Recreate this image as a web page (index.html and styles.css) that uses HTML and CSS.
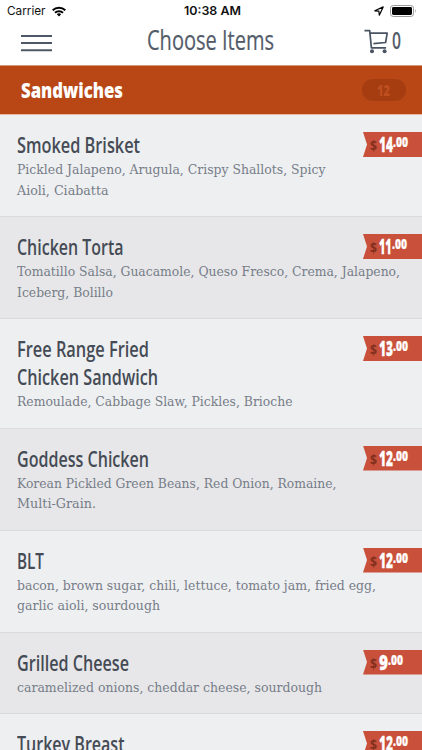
FILE: index.html
```html
<!DOCTYPE html>
<html lang="en">
<head>
<meta charset="utf-8">
<title>Choose Items</title>
<link rel="stylesheet" href="styles.css">
</head>
<body>
<header class="top">
  <div class="status">
    <div class="carrier"><span class="fit" data-w="38.5">Carrier</span>
      <svg width="14" height="11" viewBox="0 0 14 11"><g fill="none" stroke="#000" stroke-width="2"><path d="M.7 4.2a9 9 0 0 1 12.6 0"/><path d="M3 6.8a5.7 5.7 0 0 1 8 0"/></g><path d="M4.8 8.3a3.2 3.2 0 0 1 4.4 0L7 10.6z"/></svg>
    </div>
    <div class="clock"><span class="fit" data-w="57">10:38 AM</span></div>
    <div class="power">
      <svg width="10" height="10" viewBox="0 0 10 10"><path d="M.8 4.8 9.2.9 5.3 9.2 4.9 5.1z" fill="none" stroke="#000" stroke-width="1.2" stroke-linejoin="round"/></svg>
      <svg width="27" height="12" viewBox="0 0 27 12"><rect x=".5" y=".5" width="23" height="11" rx="2.8" fill="#fff" stroke="#999"/><rect x="2" y="2" width="20" height="8" rx="1.4"/><path d="M25 4q1.6 2 0 4z" fill="#999"/></svg>
    </div>
  </div>
  <div class="nav">
    <svg class="menu" width="31" height="18" viewBox="0 0 31 18"><path d="M0 2h31M0 9h31M0 16.2h31" stroke="#4f5866" stroke-width="2"/></svg>
    <h1><span class="fit" data-w="127">Choose Items</span></h1>
    <div class="cart">
      <svg width="25" height="25" viewBox="0 0 25 25"><g fill="none" stroke="#4a5361" stroke-width="1.7" stroke-linejoin="round"><path d="M.5 1.7h5.2l1.7 17.1h14.7"/><path d="M6 4.2h17.2l-1.6 9.3-12.2 1.2"/></g><circle cx="8" cy="22.2" r="2" fill="#4a5361"/><circle cx="20.6" cy="22.2" r="2" fill="#4a5361"/></svg>
      <span class="fit" data-w="9">0</span>
    </div>
  </div>
</header>
<main>
  <div class="section"><h2><span class="fit" data-w="102">Sandwiches</span></h2><div class="count"><span class="fit" data-w="13">12</span></div></div>
  <article><div class="text"><h3><span class="fit" data-w="123">Smoked Brisket</span></h3><p><span class="fit" data-w="308.5">Pickled Jalapeno, Arugula, Crispy Shallots, Spicy</span><span class="fit" data-w="91.5">Aioli, Ciabatta</span></p></div><div class="price"><span class="cur fit" data-w="7">$</span><b class="fit" data-w="14">14</b><sup class="fit" data-w="15">.00</sup></div></article>
  <article><div class="text"><h3><span class="fit" data-w="106.5">Chicken Torta</span></h3><p><span class="fit" data-w="383">Tomatillo Salsa, Guacamole, Queso Fresco, Crema, Jalapeno,</span><span class="fit" data-w="96">Iceberg, Bolillo</span></p></div><div class="price"><span class="cur fit" data-w="7">$</span><b class="fit" data-w="12.5">11</b><sup class="fit" data-w="15">.00</sup></div></article>
  <article><div class="text"><h3><span class="fit" data-w="132">Free Range Fried</span><span class="fit" data-w="141">Chicken Sandwich</span></h3><p><span class="fit" data-w="275.5">Remoulade, Cabbage Slaw, Pickles, Brioche</span></p></div><div class="price"><span class="cur fit" data-w="7">$</span><b class="fit" data-w="14">13</b><sup class="fit" data-w="15">.00</sup></div></article>
  <article><div class="text"><h3><span class="fit" data-w="132">Goddess Chicken</span></h3><p><span class="fit" data-w="319.5">Korean Pickled Green Beans, Red Onion, Romaine,</span><span class="fit" data-w="79">Multi-Grain.</span></p></div><div class="price"><span class="cur fit" data-w="7">$</span><b class="fit" data-w="14">12</b><sup class="fit" data-w="15">.00</sup></div></article>
  <article><div class="text"><h3><span class="fit" data-w="27">BLT</span></h3><p><span class="fit" data-w="359">bacon, brown sugar, chili, lettuce, tomato jam, fried egg,</span><span class="fit" data-w="143">garlic aioli, sourdough</span></p></div><div class="price"><span class="cur fit" data-w="7">$</span><b class="fit" data-w="14">12</b><sup class="fit" data-w="15">.00</sup></div></article>
  <article><div class="text"><h3><span class="fit" data-w="112">Grilled Cheese</span></h3><p><span class="fit" data-w="305">caramelized onions, cheddar cheese, sourdough</span></p></div><div class="price"><span class="cur fit" data-w="7">$</span><b class="fit" data-w="9">9</b><sup class="fit" data-w="15">.00</sup></div></article>
  <article><div class="text"><h3><span class="fit" data-w="107.5">Turkey Breast</span></h3></div><div class="price"><span class="cur fit" data-w="7">$</span><b class="fit" data-w="14">12</b><sup class="fit" data-w="15">.00</sup></div></article>
</main>
<script src="fit.js"></script>
</body>
</html>
```
FILE: styles.css
```css
* { box-sizing: border-box; }
body { margin: 0; width: 422px; height: 750px; overflow: hidden; display: flex; flex-direction: column; background: #eeeff1; font-family: "Open Sans", "Noto Sans", sans-serif; }
h1, h2, h3, p { margin: 0; font-weight: 400; }
svg { display: block; flex: none; }
.fit { display: block; flex: none; white-space: nowrap; transform-origin: 0 50%; }
.top { height: 65px; flex: none; background: #fff; }
.status { height: 22px; display: grid; grid-template-columns: 1fr 57px 1fr; align-items: center; padding: 0 5px 0 7px; font: 12px/22px Inter, sans-serif; color: #111; }
.carrier { display: flex; gap: 6px; align-items: center; }
.clock { font-weight: 600; }
.power { display: flex; justify-content: flex-end; align-items: center; gap: 6px; }
.nav { height: 43px; display: flex; align-items: flex-start; padding: 0 20px 0 21px; color: #535c69; }
.menu { margin-top: 12px; }
h1 { margin-left: 95px; font-size: 26.5px; line-height: 36px; font-weight: 500; -webkit-text-stroke: .2px currentColor; }
.cart { display: flex; margin: 7px 0 0 90px; gap: 3px; }
.cart .fit { font-size: 22.5px; line-height: 23px; font-weight: 600; }
main { flex: 1; overflow: hidden; }
.section { height: 50px; border-top: 1px solid #d19a7d; border-bottom: 1px solid #e5b8a4; background: #b84715; display: flex; align-items: center; justify-content: space-between; padding: 0 16px 0 21px; }
h2 { font-size: 21px; line-height: 30px; font-weight: 800; color: #fff; }
.count { width: 44px; height: 22px; border-radius: 11px; background: #a53d11; color: #bf4e20; font-size: 16px; line-height: 22px; font-weight: 800; padding-left: 15px; }
article { display: flex; justify-content: space-between; padding: 16px 0 16px 17px; border-bottom: 1px solid #d9dadc; background: #eeeff1; }
article:nth-of-type(even) { background: #e7e7e9; }
.text { flex: 1; min-width: 0; }
h3 { font-size: 21px; line-height: 28px; font-weight: 600; color: #454b55; }
p { font-family: "DejaVu Serif", serif; font-size: 13.5px; line-height: 20.5px; color: #767d88; }
.price { margin-left: -59px; margin-top: 1px; width: 59px; height: 25px; background: #c9503a; clip-path: polygon(0 0, 100% 0, 100% 100%, 0 100%, 4px 50%); display: flex; align-items: flex-start; color: #fff; padding-left: 7px; }
.price .cur { margin-right: 2px; font-size: 15px; line-height: 26px; font-weight: 700; color: #83301f; }
.price b { font-size: 21px; line-height: 24px; font-weight: 800; -webkit-text-stroke: .3px #fff; }
.price sup { font-size: 14px; line-height: 19px; font-weight: 800; -webkit-text-stroke: .2px #fff; }
```
FILE: fit.js
```js
// Condense each line of type to its measure.
document.querySelectorAll('.fit').forEach(function (el) {
  el.style.width = 'max-content';
  var natural = el.getBoundingClientRect().width;
  var w = parseFloat(el.dataset.w);
  el.style.width = w + 'px';
  el.style.transform = 'scaleX(' + w / natural + ')';
});
```
